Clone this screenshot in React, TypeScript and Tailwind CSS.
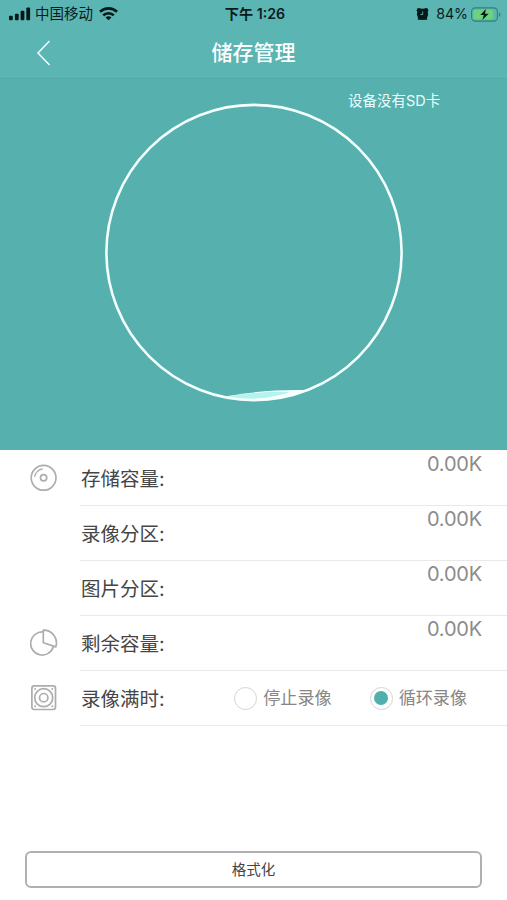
import type { ReactNode } from "react";

function DiscIcon() {
  return (
    <svg width="28" height="28" viewBox="0 0 28 28" fill="none" stroke="#adadad" strokeWidth="1.7">
      <circle cx="13.6" cy="13.8" r="12.4" />
      <circle cx="13.6" cy="13.8" r="3.1" />
      <path d="M4.6 13A9 9 0 0 1 12.6 5" strokeWidth="1.3" />
    </svg>
  );
}

function PieIcon() {
  return (
    <svg width="28" height="28" viewBox="0 0 28 28" fill="none" stroke="#adadad" strokeWidth="1.7" strokeLinejoin="round">
      <path d="M13.3 2.9A11.6 11.6 0 1 0 23.4 17.6" />
      <path d="M13.3 1.2V13.8L25.8 17.9A12.8 12.8 0 0 0 13.3 1.2Z" />
    </svg>
  );
}

function RecorderIcon() {
  return (
    <svg width="28" height="28" viewBox="0 0 28 28" fill="none" stroke="#adadad" strokeWidth="1.7">
      <rect x="1.9" y="1.9" width="23.6" height="23.6" rx="2.4" />
      <circle cx="13.7" cy="13.7" r="9" />
      <circle cx="13.7" cy="13.7" r="4.2" />
      <g fill="#adadad" stroke="none">
        <circle cx="5.1" cy="5.1" r="1" />
        <circle cx="22.3" cy="5.1" r="1" />
        <circle cx="5.1" cy="22.3" r="1" />
        <circle cx="22.3" cy="22.3" r="1" />
      </g>
    </svg>
  );
}

function StatusBar() {
  return (
    <div className="grid h-7 grid-cols-[1fr_auto_1fr] items-center pr-1.5 pl-[9px] text-[14.5px] leading-7 text-[#0b1b1c]">
      <div className="flex items-center">
        <svg width="22" height="14" viewBox="0 0 22 14" fill="#06191a">
          <rect x="0" y="8.8" width="3.8" height="4.4" rx="1" />
          <rect x="5.9" y="6.8" width="3.8" height="6.4" rx="1" />
          <rect x="11.6" y="3.8" width="3.8" height="9.4" rx="1" />
          <rect x="17.3" y="0.5" width="3.8" height="12.7" rx="1" />
        </svg>
        <span className="ml-1">中国移动</span>
        <svg className="ml-1.5" width="19" height="14" viewBox="0 0 19 14" fill="none" stroke="#06191a" strokeWidth="2.7">
          <path d="M1 4.8a12.2 12.2 0 0 1 17 0" />
          <path d="M4.2 8.4a7.6 7.6 0 0 1 10.6 0" />
          <path d="M9.5 13.3 6.5 10.4a4.2 4.2 0 0 1 6 0Z" fill="#06191a" stroke="none" />
        </svg>
      </div>
      <div className="text-[14.2px] font-semibold">下午 1:26</div>
      <div className="flex items-center justify-end">
        <svg width="13" height="14" viewBox="0 0 13 14">
          <g fill="#06191a">
            <circle cx="6.5" cy="7.2" r="5.6" />
            <circle cx="3" cy="3.2" r="2.3" />
            <circle cx="10" cy="3.2" r="2.3" />
            <path d="M2 9 1.8 12.8h9.4L11 9Z" />
          </g>
          <path d="M6.7 4.5v3H4.4" fill="none" stroke="#5ab5b3" strokeWidth="0.9" />
        </svg>
        <span className="ml-[7px] text-[14.2px]">84%</span>
        <svg className="ml-[3px]" width="30" height="15" viewBox="0 0 30 15">
          <rect x="0.6" y="0.9" width="25.8" height="13.2" rx="3.8" fill="none" stroke="#347e7d" strokeWidth="1.1" />
          <rect x="2.2" y="2.5" width="20" height="10" rx="2.4" fill="#6cd27e" />
          <path d="M28 5.4c1.8.5 1.8 3.7 0 4.2Z" fill="#347e7d" />
          <path d="M14.9 1.9 9.3 8h3.5l-1.5 5 6.3-6.3H14Z" fill="#06191a" />
        </svg>
      </div>
    </div>
  );
}

function Gauge() {
  return (
    <svg className="mx-auto" width="300" height="300" viewBox="0 0 300 300">
      <path d="M119 294C140 289.5 174 286.3 203 287.2Q160 303 119 294Z" fill="#f5ffff" />
      <path d="M121 294C141 290.2 164 288.2 186 289Q168 295.5 142 296.5Z" fill="#b6f3ef" />
      <circle cx="150" cy="149.5" r="147.6" fill="none" stroke="#f3ffff" strokeWidth="2.6" />
    </svg>
  );
}

function Row({ icon, label, children }: { icon?: ReactNode; label: string; children: ReactNode }) {
  return (
    <div className="flex h-[55px]">
      <div className="flex w-20 shrink-0 items-center pb-px pl-[30px]">{icon}</div>
      <div className="flex flex-1 justify-between border-b border-[#e9e9e9] pl-px">
        <span className="pt-px text-[19.5px] leading-[54px] text-[#454545]">{label}</span>
        {children}
      </div>
    </div>
  );
}

function Size({ value }: { value: string }) {
  return (
    <span className="pr-[25px] font-['Inter','Liberation_Sans',sans-serif] text-[20px] leading-[27px] tracking-[-0.2px] text-[#8c8c8c]">
      {value}
    </span>
  );
}

function Option({ label, checked }: { label: string; checked?: boolean }) {
  return (
    <div className="flex items-center gap-1.5">
      <span className="flex size-[23px] items-center justify-center rounded-full border border-[#d4d4d4]">
        {checked && <span className="size-3.5 rounded-full bg-[#50b0ad]" />}
      </span>
      <span className="text-[17.1px] leading-6 text-[#868686]">{label}</span>
    </div>
  );
}

export default function App() {
  return (
    <main className="flex h-[900px] w-[507px] flex-col bg-white font-['Inter','Noto_Sans_CJK_SC',sans-serif]">
      <header className="h-[79px] border-b border-[#51aaa8] bg-[#5bb5b3]">
        <StatusBar />
        <div className="grid h-[49px] grid-cols-[1fr_auto_1fr] items-center">
          <svg className="ml-[36px]" width="15" height="26" viewBox="0 0 15 26" fill="none" stroke="#f1ffff" strokeWidth="1.5">
            <path d="M13.5 1 2 13l11.5 12" />
          </svg>
          <h1 className="text-[21px] font-medium text-white">储存管理</h1>
        </div>
      </header>

      <section className="h-[371px] bg-[#55b0ae]">
        <p className="h-6 pt-[11px] pl-[348px] text-[14.5px] leading-[22px] text-[#e9ffff]">设备没有SD卡</p>
        <Gauge />
      </section>

      <section className="pt-px">
        <Row icon={<DiscIcon />} label="存储容量:">
          <Size value="0.00K" />
        </Row>
        <Row label="录像分区:">
          <Size value="0.00K" />
        </Row>
        <Row label="图片分区:">
          <Size value="0.00K" />
        </Row>
        <Row icon={<PieIcon />} label="剩余容量:">
          <Size value="0.00K" />
        </Row>
        <Row icon={<RecorderIcon />} label="录像满时:">
          <div className="flex gap-[38px] pr-10">
            <Option label="停止录像" />
            <Option label="循环录像" checked />
          </div>
        </Row>
      </section>

      <button className="mx-[25px] mt-auto mb-3 h-[37px] rounded-md border-2 border-[#b0b0b0] text-[14.5px] text-[#444]">
        格式化
      </button>
    </main>
  );
}
